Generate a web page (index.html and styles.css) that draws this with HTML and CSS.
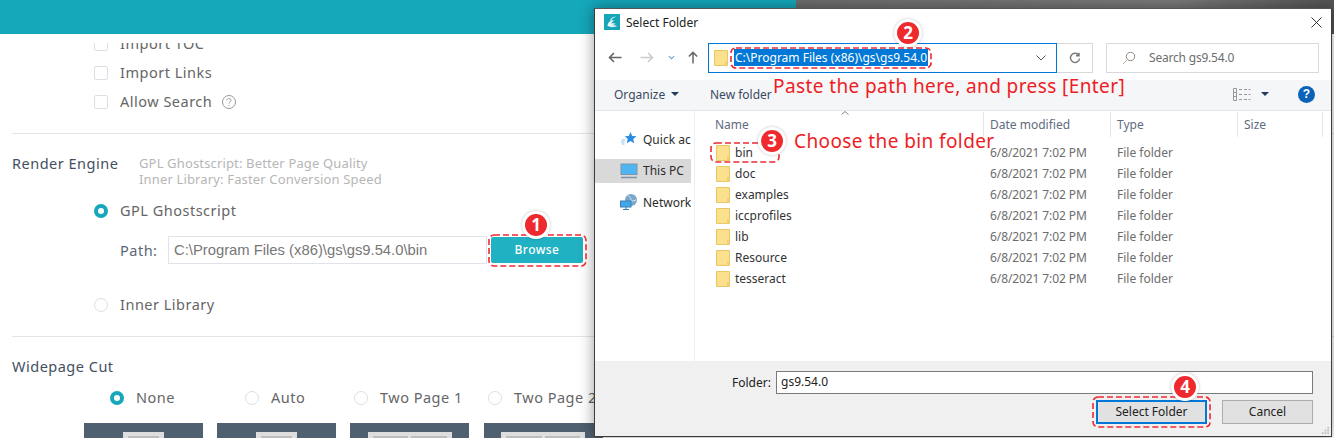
FILE: index.html
```html
<!DOCTYPE html>
<html lang="en">
<head>
<meta charset="utf-8">
<title>Select Folder</title>
<link rel="stylesheet" href="styles.css">
</head>
<body>
<div class="stage">
  <header class="topbar"><div class="topbar-teal"></div><div class="topbar-dim"></div></header>
  <main class="settings">
    <div class="scroller">
    <section class="checks">
      <label class="check-row"><span class="checkbox"></span>Import TOC</label>
      <label class="check-row"><span class="checkbox"></span>Import Links</label>
      <label class="check-row"><span class="checkbox"></span>Allow Search
        <svg class="help" viewBox="0 0 16 16"><circle cx="8" cy="8" r="6.5"/><path d="M6 6.4C6 5 7 4.5 8 4.5s2 .7 2 1.8c0 1.5-2 1.6-2 3.2M8 11v1.2"/></svg>
      </label>
    </section>
    <hr class="rule rule-a">
    <section class="engine">
      <div class="engine-head">
        <span class="section-title">Render Engine</span>
        <p class="hint">GPL Ghostscript: Better Page Quality<br>Inner Library: Faster Conversion Speed</p>
      </div>
      <label class="radio-row row-gpl"><span class="radio on"></span>GPL Ghostscript</label>
      <div class="path-row">
        <span class="path-label">Path:</span>
        <span class="path-input">C:\Program Files (x86)\gs\gs9.54.0\bin</span>
        <span class="browse">Browse</span>
      </div>
      <label class="radio-row row-inner"><span class="radio"></span>Inner Library</label>
    </section>
    <hr class="rule rule-b">
    <section class="cut">
      <div class="section-title">Widepage Cut</div>
      <div class="cut-options">
        <label class="cut-option opt-none"><span class="radio on"></span>None</label>
        <label class="cut-option opt-auto"><span class="radio"></span>Auto</label>
        <label class="cut-option opt-two1"><span class="radio"></span>Two Page 1</label>
        <label class="cut-option opt-two2"><span class="radio"></span>Two Page 2</label>
      </div>
      <div class="thumbs">
        <div class="thumb"><span class="paper"><i class="sheet"></i></span></div>
        <div class="thumb"><span class="paper"><i class="sheet"></i></span></div>
        <div class="thumb"><span class="paper wide"><i class="sheet"></i><i class="sheet"></i></span></div>
        <div class="thumb"><span class="paper wide"><i class="sheet"></i><i class="sheet"></i></span></div>
      </div>
    </section>
    </div>
  </main>

  <div class="dialog">
    <div class="titlebar">
      <svg class="app-icon" viewBox="0 0 16 16"><rect width="16" height="16" fill="#17a5b8"/><path d="M11.5 2.5C8 3 6 5 6.5 7c-2 1-3 3-3 5 3 1.500 7 1.500 9.500 0-1-1-3-1-5-.5 2-1 3-1.500 4-1.500-1.500-1-3.500-1-5-.5 1-1.500 2-2.500 3-3-1-.5-2-.5-3 0 1-2 2.500-3 4.500-3.500z" fill="#e8f8fa"/></svg>
      <span class="title">Select Folder</span>
      <svg class="close" viewBox="0 0 12 12"><path d="M.5.500l11 11M11.500.500l-11 11"/></svg>
    </div>
    <div class="navrow">
      <svg class="nav nav-back" viewBox="0 0 14 12"><path d="M13.500 6H1.500M6 1.500L1.500 6 6 10.500"/></svg>
      <svg class="nav nav-fwd" viewBox="0 0 14 12"><path d="M.5 6h12M8 1.500L12.500 6 8 10.500"/></svg>
      <svg class="nav-drop" viewBox="0 0 8 5"><path d="M1 1l3 3 3-3"/></svg>
      <svg class="nav nav-up" viewBox="0 0 12 14"><path d="M6 13.500V1.500M1.500 6L6 1.500 10.500 6"/></svg>
      <div class="address">
        <svg class="folder" viewBox="0 0 14 16"><path d="M.5.500h13v15H.5z" fill="#fbe08e" stroke="#e9c765"/><path d="M11 11h2.500v4.500H11z" fill="#f2cf72"/></svg>
        <span class="address-text">C:\Program Files (x86)\gs\gs9.54.0</span>
        <svg class="address-drop" viewBox="0 0 10 6"><path d="M.5.500L5 5 9.500.500"/></svg>
      </div>
      <div class="refresh"><svg viewBox="0 0 12 12"><path d="M9.800 3.200A4.600 4.600 0 1 0 10.600 6.500M10 .8v3H7"/></svg></div>
      <div class="search">
        <svg viewBox="0 0 14 14"><circle cx="8.500" cy="5.500" r="4.200"/><path d="M5.500 8.500L1 13" stroke="#c9a58a"/></svg>
        <span>Search gs9.54.0</span>
      </div>
    </div>
    <div class="toolbar">
      <span class="tool tool-org">Organize<i class="caret"></i></span>
      <span class="tool">New folder</span>
      <svg class="views" viewBox="0 0 18 13"><path d="M.5.500h3v12h-3zM.5 4.500h3M.5 8.500h3M6 1.500h3M11 1.500h3M15.500 1.500h2M6 6.500h3M11 6.500h3M15.500 6.500h2M6 11.500h3M11 11.500h3M15.500 11.500h2"/></svg>
      <i class="caret caret-views"></i>
      <span class="help-badge">?</span>
    </div>
    <div class="browser">
      <nav class="sidebar">
        <div class="side-item item-quick">
          <svg viewBox="0 0 16 16"><path d="M9.500 1l1.700 4 4.300.3-3.300 2.800 1 4.200-3.700-2.300-3.700 2.300 1-4.200-3-2.800 4-.3z" fill="#2a8be0"/><path d="M.5 9h4M0 11h3.500M1 13h2.500" stroke="#8cc4f0"/></svg>
          <span>Quick ac</span>
        </div>
        <div class="side-item item-pc">
          <svg viewBox="0 0 18 16"><rect x="1" y="1" width="16" height="10.500" fill="#4db5f2" stroke="#7d93a8"/><path d="M1 14.500h16" stroke="#7d93a8" stroke-width="1.500"/></svg>
          <span>This PC</span>
        </div>
        <div class="side-item item-net">
          <svg viewBox="0 0 18 16"><circle cx="11" cy="6" r="6" fill="#7aa6c9"/><path d="M8 1.500c2 1 3 3 3 4.500s2 1 5 0" fill="none" stroke="#d5e6f2"/><rect x=".5" y="7" width="10.500" height="6" fill="#3fa7ea" stroke="#3f80b0"/><path d="M6 13v2M3 15.500h6" stroke="#3f80b0"/></svg>
          <span>Network</span>
        </div>
      </nav>
      <div class="files">
        <div class="file-head">
          <svg class="sort" viewBox="0 0 8 4"><path d="M.5 3.500L4 .5l3.500 3"/></svg>
          <span class="col col-name">Name</span>
          <span class="col col-date">Date modified</span>
          <span class="col col-type">Type</span>
          <span class="col col-size">Size</span>
        </div>
        <div class="file-row"><svg class="folder" viewBox="0 0 14 16"><path d="M.5.500h13v15H.5z" fill="#fbe08e" stroke="#e9c765"/><path d="M11 11h2.500v4.500H11z" fill="#f2cf72"/></svg><span class="f-name">bin</span><span class="f-date">6/8/2021 7:02 PM</span><span class="f-type">File folder</span></div>
        <div class="file-row"><svg class="folder" viewBox="0 0 14 16"><path d="M.5.500h13v15H.5z" fill="#fbe08e" stroke="#e9c765"/><path d="M11 11h2.500v4.500H11z" fill="#f2cf72"/></svg><span class="f-name">doc</span><span class="f-date">6/8/2021 7:02 PM</span><span class="f-type">File folder</span></div>
        <div class="file-row"><svg class="folder" viewBox="0 0 14 16"><path d="M.5.500h13v15H.5z" fill="#fbe08e" stroke="#e9c765"/><path d="M11 11h2.500v4.500H11z" fill="#f2cf72"/></svg><span class="f-name">examples</span><span class="f-date">6/8/2021 7:02 PM</span><span class="f-type">File folder</span></div>
        <div class="file-row"><svg class="folder" viewBox="0 0 14 16"><path d="M.5.500h13v15H.5z" fill="#fbe08e" stroke="#e9c765"/><path d="M11 11h2.500v4.500H11z" fill="#f2cf72"/></svg><span class="f-name">iccprofiles</span><span class="f-date">6/8/2021 7:02 PM</span><span class="f-type">File folder</span></div>
        <div class="file-row"><svg class="folder" viewBox="0 0 14 16"><path d="M.5.500h13v15H.5z" fill="#fbe08e" stroke="#e9c765"/><path d="M11 11h2.500v4.500H11z" fill="#f2cf72"/></svg><span class="f-name">lib</span><span class="f-date">6/8/2021 7:02 PM</span><span class="f-type">File folder</span></div>
        <div class="file-row"><svg class="folder" viewBox="0 0 14 16"><path d="M.5.500h13v15H.5z" fill="#fbe08e" stroke="#e9c765"/><path d="M11 11h2.500v4.500H11z" fill="#f2cf72"/></svg><span class="f-name">Resource</span><span class="f-date">6/8/2021 7:02 PM</span><span class="f-type">File folder</span></div>
        <div class="file-row"><svg class="folder" viewBox="0 0 14 16"><path d="M.5.500h13v15H.5z" fill="#fbe08e" stroke="#e9c765"/><path d="M11 11h2.500v4.500H11z" fill="#f2cf72"/></svg><span class="f-name">tesseract</span><span class="f-date">6/8/2021 7:02 PM</span><span class="f-type">File folder</span></div>
      </div>
    </div>
    <div class="footer">
      <div class="folder-row"><span class="folder-label">Folder:</span><span class="folder-input">gs9.54.0</span></div>
      <div class="buttons"><span class="btn btn-primary">Select Folder</span><span class="btn">Cancel</span></div>
    </div>
    <svg class="grip" viewBox="0 0 10 10"><path d="M7 1h2v2H7zM4 4h2v2H4zM7 4h2v2H7zM1 7h2v2H1zM4 7h2v2H4zM7 7h2v2H7z"/></svg>
  </div>

  <svg class="dash dash-browse"><rect x="1" y="1" rx="5"/></svg>
  <svg class="dash dash-path"><rect x="1" y="1" rx="5"/></svg>
  <svg class="dash dash-bin"><rect x="1" y="1" rx="5"/></svg>
  <svg class="dash dash-select"><rect x="1" y="1" rx="5"/></svg>
  <span class="badge badge-1">1</span>
  <span class="badge badge-2">2</span>
  <span class="badge badge-3">3</span>
  <span class="badge badge-4">4</span>
  <span class="note note-paste">Paste the path here, and press [Enter]</span>
  <span class="note note-bin">Choose the bin folder</span>
</div>
</body>
</html>
```
FILE: styles.css
```css
* { box-sizing: border-box; }
html, body { margin: 0; padding: 0; overflow: hidden; background: #fff; }
.stage { position: relative; width: 1334px; height: 438px; overflow: hidden; font-family: "Noto Sans", "Liberation Sans", sans-serif; }

.topbar { display: flex; height: 34px; }
.topbar-teal { width: 796px; background: #15a7ba; }
.topbar-dim { flex: 1; background: linear-gradient(90deg, #6d6d6d, #7a7a7a 70%, #555); }

.settings { height: 404px; padding-top: 9px; color: #666; font-size: 14.5px; letter-spacing: .5px; }
.scroller { height: 395px; overflow: hidden; padding-left: 12px; }
.checks { margin-top: -14px; padding-left: 82px; }
.check-row { display: flex; align-items: center; height: 29px; padding-bottom: 2px; }
.checkbox { width: 14px; height: 14px; margin: 2px 12px 0 0; border: 1px solid #dcdfe6; border-radius: 2px; background: #fff; }
.help { width: 16px; height: 16px; margin: 2px 0 0 9px; fill: none; stroke: #999; stroke-width: 1; }

.rule { height: 1px; margin: 0; border: 0; background: #e4e5e7; }
.rule-a { margin-top: 17px; }
.rule-b { margin-top: 21px; }

.engine-head { display: flex; margin-top: 20px; height: 36px; }
.section-title { color: #43505f; font-size: 14.5px; line-height: 18px; }
.engine-head .section-title { width: 127px; }
.hint { margin: 0; padding-top: 1px; color: #b6b6b6; font-size: 13px; line-height: 16px; letter-spacing: .15px; }
.radio-row { display: flex; align-items: center; padding-left: 82px; height: 20px; padding-bottom: 2px; }
.row-gpl { margin-top: 11px; }
.row-inner { margin-top: 31px; }
.radio { width: 14px; height: 14px; margin: 2px 12px 0 0; border: 1px solid #dcdfe6; border-radius: 50%; background: #fff; flex: none; }
.radio.on { border: 4px solid #15a7ba; }

.path-row { display: flex; align-items: center; margin-top: 15px; padding-left: 108px; }
.path-label { width: 48px; color: #5a6776; }
.path-input { width: 319px; height: 28px; padding-left: 5px; border: 1px solid #e1e3ea; color: #777; font: 14.8px/26px "Liberation Sans", sans-serif; letter-spacing: 0; white-space: nowrap; }
.browse { width: 92px; height: 26px; margin-left: 4px; border-radius: 2px; background: #20b1c3; color: #fff; font-size: 12px; font-weight: 500; line-height: 26px; text-align: center; letter-spacing: .45px; }

.cut { padding-top: 20px; }
.cut-options { display: flex; margin-top: 13px; height: 20px; }
.cut-option { display: flex; align-items: center; flex: none; padding-bottom: 2px; }
.opt-none { margin-left: 98px; width: 135px; }
.opt-auto { width: 109px; }
.opt-two1 { width: 134px; }
.thumbs { display: flex; gap: 14.2px; margin-top: 15px; margin-left: 72px; }
.thumb { display: flex; justify-content: center; width: 119px; height: 40px; padding-top: 9px; background: #4f6070; }
.paper { display: flex; justify-content: center; gap: 3px; width: 41px; height: 30px; padding: 4px 5px 0; background: #dedede; }
.paper.wide { width: 84px; }
.sheet { flex: 1; height: 20px; background: #bdbdbd; }

.dialog { position: absolute; left: 594px; top: 8px; width: 738px; height: 429px; display: flex; flex-direction: column; background: #fff; border: 1px solid #3d3d3d; border-top-color: #555; box-shadow: 0 0 14px rgba(0,0,0,.4); font-size: 12px; color: #333; overflow: hidden; }
.titlebar { display: flex; align-items: center; height: 26px; padding: 0 9px 0 9px; flex: none; }
.app-icon { width: 16px; height: 16px; margin-right: 6px; }
.title { color: #222; font-size: 12px; }
.close { width: 11px; height: 11px; margin-left: auto; fill: none; stroke: #222; stroke-width: 1; }

.navrow { display: flex; align-items: center; height: 45px; flex: none; }
.nav { height: 13px; fill: none; stroke-width: 1.6; }
.nav-back { width: 14px; margin-left: 13px; stroke: #666; }
.nav-fwd { width: 14px; margin-left: 18px; stroke: #ccc; }
.nav-drop { width: 7px; height: 5px; margin-left: 14px; fill: none; stroke: #6f9ac4; stroke-width: 1.200; }
.nav-up { width: 12px; margin-left: 12px; stroke: #666; }
.address { display: flex; align-items: center; width: 349px; height: 30px; margin-left: 9px; padding-left: 5px; border: 1px solid #0078d7; }
.address .folder { margin: 0; width: 14px; height: 16px; }
.address-text { margin-left: 6px; padding: 0 1px; background: #0078d7; color: #fff; line-height: 17px; font-size: 12px; }
.address-drop { width: 10px; height: 6px; margin-left: auto; margin-right: 10px; fill: none; stroke: #555; stroke-width: 1; }
.refresh { display: flex; align-items: center; justify-content: center; width: 36px; height: 30px; border: 1px solid #d9d9d9; border-left: 0; }
.refresh svg { width: 12px; height: 12px; fill: none; stroke: #777; stroke-width: 1.400; }
.search { display: flex; align-items: center; width: 213px; height: 30px; margin-left: 13px; padding-left: 15px; border: 1px solid #d9d9d9; color: #6d6d6d; letter-spacing: -.2px; }
.search svg { width: 14px; height: 14px; margin-right: 13px; fill: none; stroke: #8a8a8a; stroke-width: 1; }

.toolbar { position: relative; display: flex; align-items: center; height: 31px; flex: none; padding-bottom: 2px; background: #f5f6f7; border-bottom: 1px solid #e6e6e6; color: #3b4a63; }
.tool { display: flex; align-items: center; }
.tool-org { margin-left: 19px; width: 96px; }
.caret { display: inline-block; margin-left: 6px; border: 4px solid transparent; border-top: 4px solid #223a5e; border-bottom: 0; }
.views { width: 18px; height: 13px; margin-left: 461px; fill: none; stroke: #999; stroke-width: 1; }
.caret-views { margin-left: 10px; }
.help-badge { width: 17px; height: 17px; margin-left: 29px; border-radius: 50%; background: #0a63b8; color: #fff; font: bold 12px/17px "Liberation Sans", sans-serif; text-align: center; }

.browser { display: flex; flex: 1; min-height: 0; }
.sidebar { display: flex; flex-direction: column; width: 100px; padding-top: 16px; border-right: 1px solid #eee; flex: none; }
.side-item { display: flex; align-items: center; height: 24px; width: 96px; color: #2c2c2c; overflow: hidden; white-space: nowrap; }
.side-item svg { width: 18px; height: 16px; margin-right: 5px; flex: none; }
.item-quick { padding-left: 25px; margin-bottom: 8px; }
.item-pc { background: #d9d9d9; padding-left: 25px; margin-bottom: 7px; padding-bottom: 1px; }
.item-net { padding-left: 25px; }
.files { position: relative; flex: 1; padding-left: 21px; color: #333; }
.file-head { position: relative; display: flex; height: 31px; margin-left: -21px; color: #5f6b80; }
.sort { position: absolute; left: 146px; top: 0; width: 8px; height: 4px; fill: none; stroke: #888; stroke-width: 1; }
.col { display: block; height: 25px; padding: 4px 0 0 6px; margin-top: 1px; border-right: 1px solid #e6e6e6; line-height: 18px; }
.col-name { width: 289px; padding-left: 20px; }
.col-date { width: 127px; }
.col-type { width: 127px; }
.col-size { width: 85px; }
.file-row { display: flex; align-items: center; height: 21px; }
.file-row .folder { width: 14px; height: 16px; margin-right: 5px; flex: none; }
.f-name { width: 255px; color: #333; }
.f-date { width: 127px; color: #6d6d6d; letter-spacing: -.1px; }
.f-type { color: #6d6d6d; }

.footer { height: 75px; flex: none; background: #f0f0f0; padding-top: 10px; }
.folder-row { display: flex; align-items: center; padding-left: 137px; }
.folder-label { width: 44px; color: #222; }
.folder-input { width: 537px; height: 23px; padding-left: 4px; border: 1px solid #7a7a7a; background: #fff; color: #222; line-height: 20px; }
.buttons { display: flex; justify-content: flex-end; gap: 15px; margin-top: 6px; padding-right: 18px; }
.btn { width: 91px; height: 24px; border: 1px solid #adadad; background: #e1e1e1; color: #222; line-height: 22px; text-align: center; }
.btn-primary { width: 111px; border: 2px solid #0078d7; line-height: 20px; }
.grip { position: absolute; right: 1px; bottom: 1px; width: 9px; height: 9px; fill: #c4c4c4; }

.dash { position: absolute; fill: none; stroke: #ee2a33; stroke-width: 1.6; stroke-dasharray: 6 3; }
.dash rect { width: calc(100% - 2px); height: calc(100% - 2px); }
.dash-browse { left: 488px; top: 234px; width: 99px; height: 33px; }
.dash-path { left: 730px; top: 47px; width: 202px; height: 22px; }
.dash-bin { left: 710px; top: 142px; width: 70px; height: 21px; }
.dash-select { left: 1092px; top: 396px; width: 119px; height: 32px; }
.badge { position: absolute; width: 28px; height: 28px; border-radius: 50%; background: #ee2a2e; border: 3px solid #fff; box-shadow: 0 0 3px rgba(0,0,0,.25); color: #fff; font: bold 17px/22px "Noto Sans", sans-serif; text-align: center; }
.badge-1 { left: 522px; top: 211px; }
.badge-2 { left: 894px; top: 19px; }
.badge-3 { left: 758px; top: 127px; }
.badge-4 { left: 1171px; top: 373px; }
.note { position: absolute; color: #ee1c25; font-size: 19px; line-height: 24px; letter-spacing: .4px; white-space: nowrap; }
.note-paste { left: 773px; top: 74px; }
.note-bin { left: 794px; top: 129px; }
```
